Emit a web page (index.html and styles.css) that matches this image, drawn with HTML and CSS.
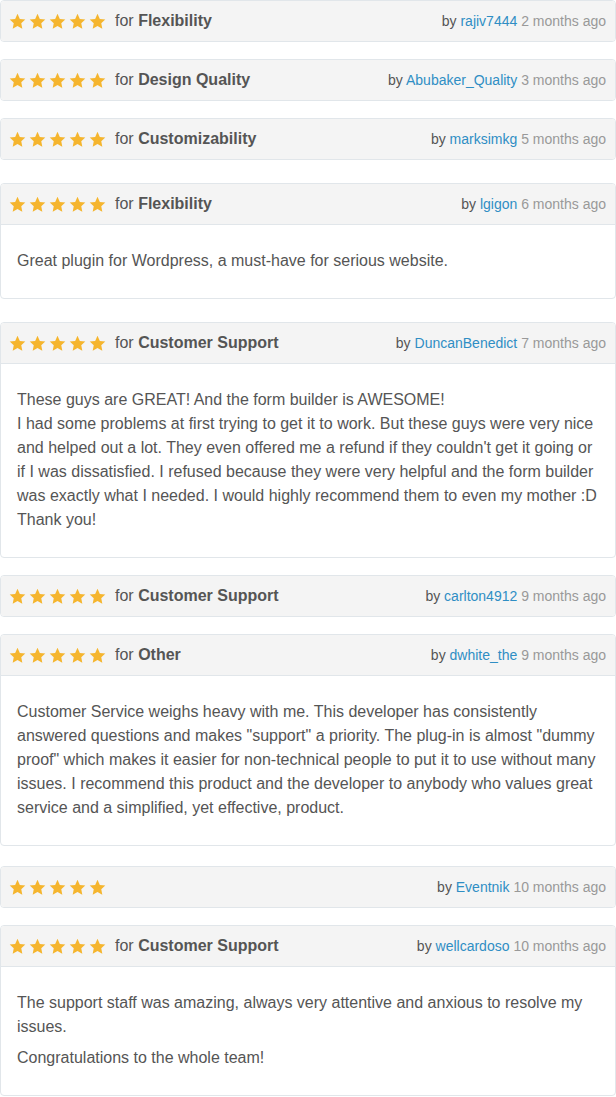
FILE: index.html
```html
<!DOCTYPE html>
<html>
<head>
<meta charset="utf-8">
<link rel="stylesheet" href="styles.css">
</head>
<body>
<svg width="0" height="0" class="defs">
  <defs>
    <symbol id="star" viewBox="0 0 24 24">
      <path d="M12 1.2l3.3 7.1 7.7.9-5.7 5.3 1.5 7.7L12 18.4l-6.8 3.8 1.5-7.7L1 9.2l7.7-.9z"/>
    </symbol>
  </defs>
</svg>
<div class="reviews">

  <div class="review">
    <div class="head">
      <div class="left"><span class="stars"><svg><use href="#star"/></svg><svg><use href="#star"/></svg><svg><use href="#star"/></svg><svg><use href="#star"/></svg><svg><use href="#star"/></svg></span><span class="for">for <b>Flexibility</b></span></div>
      <div class="meta">by <a>rajiv7444</a> <span class="ago">2 months ago</span></div>
    </div>
  </div>

  <div class="review">
    <div class="head">
      <div class="left"><span class="stars"><svg><use href="#star"/></svg><svg><use href="#star"/></svg><svg><use href="#star"/></svg><svg><use href="#star"/></svg><svg><use href="#star"/></svg></span><span class="for">for <b>Design Quality</b></span></div>
      <div class="meta">by <a>Abubaker_Quality</a> <span class="ago">3 months ago</span></div>
    </div>
  </div>

  <div class="review">
    <div class="head">
      <div class="left"><span class="stars"><svg><use href="#star"/></svg><svg><use href="#star"/></svg><svg><use href="#star"/></svg><svg><use href="#star"/></svg><svg><use href="#star"/></svg></span><span class="for">for <b>Customizability</b></span></div>
      <div class="meta">by <a>marksimkg</a> <span class="ago">5 months ago</span></div>
    </div>
  </div>

  <div class="review gap-lg">
    <div class="head">
      <div class="left"><span class="stars"><svg><use href="#star"/></svg><svg><use href="#star"/></svg><svg><use href="#star"/></svg><svg><use href="#star"/></svg><svg><use href="#star"/></svg></span><span class="for">for <b>Flexibility</b></span></div>
      <div class="meta">by <a>lgigon</a> <span class="ago">6 months ago</span></div>
    </div>
    <div class="body">
      <p>Great plugin for Wordpress, a must-have for serious website.</p>
    </div>
  </div>

  <div class="review gap-lg">
    <div class="head">
      <div class="left"><span class="stars"><svg><use href="#star"/></svg><svg><use href="#star"/></svg><svg><use href="#star"/></svg><svg><use href="#star"/></svg><svg><use href="#star"/></svg></span><span class="for">for <b>Customer Support</b></span></div>
      <div class="meta">by <a>DuncanBenedict</a> <span class="ago">7 months ago</span></div>
    </div>
    <div class="body">
      <p>These guys are GREAT! And the form builder is AWESOME!<br>I had some problems at first trying to get it to work. But these guys were very nice and helped out a lot. They even offered me a refund if they couldn't get it going or if I was dissatisfied. I refused because they were very helpful and the form builder was exactly what I needed. I would highly recommend them to even my mother :D<br>Thank you!</p>
    </div>
  </div>

  <div class="review">
    <div class="head">
      <div class="left"><span class="stars"><svg><use href="#star"/></svg><svg><use href="#star"/></svg><svg><use href="#star"/></svg><svg><use href="#star"/></svg><svg><use href="#star"/></svg></span><span class="for">for <b>Customer Support</b></span></div>
      <div class="meta">by <a>carlton4912</a> <span class="ago">9 months ago</span></div>
    </div>
  </div>

  <div class="review">
    <div class="head">
      <div class="left"><span class="stars"><svg><use href="#star"/></svg><svg><use href="#star"/></svg><svg><use href="#star"/></svg><svg><use href="#star"/></svg><svg><use href="#star"/></svg></span><span class="for">for <b>Other</b></span></div>
      <div class="meta">by <a>dwhite_the</a> <span class="ago">9 months ago</span></div>
    </div>
    <div class="body">
      <p>Customer Service weighs heavy with me. This developer has consistently answered questions and makes "support" a priority. The plug-in is almost "dummy proof" which makes it easier for non-technical people to put it to use without many issues. I recommend this product and the developer to anybody who values great service and a simplified, yet effective, product.</p>
    </div>
  </div>

  <div class="review gap-md">
    <div class="head">
      <div class="left"><span class="stars"><svg><use href="#star"/></svg><svg><use href="#star"/></svg><svg><use href="#star"/></svg><svg><use href="#star"/></svg><svg><use href="#star"/></svg></span></div>
      <div class="meta">by <a>Eventnik</a> <span class="ago">10 months ago</span></div>
    </div>
  </div>

  <div class="review">
    <div class="head">
      <div class="left"><span class="stars"><svg><use href="#star"/></svg><svg><use href="#star"/></svg><svg><use href="#star"/></svg><svg><use href="#star"/></svg><svg><use href="#star"/></svg></span><span class="for">for <b>Customer Support</b></span></div>
      <div class="meta">by <a>wellcardoso</a> <span class="ago">10 months ago</span></div>
    </div>
    <div class="body">
      <p>The support staff was amazing, always very attentive and anxious to resolve my issues.</p>
      <p>Congratulations to the whole team!</p>
    </div>
  </div>

</div>
</body>
</html>
```

FILE: styles.css
```css
html, body {
  margin: 0;
  padding: 0;
  background: #fff;
}
body {
  font-family: "Liberation Sans", Arial, sans-serif;
  color: #555;
}
.defs {
  position: absolute;
  width: 0;
  height: 0;
}
.reviews {
  display: flex;
  flex-direction: column;
  width: 616px;
}
.review {
  border: 1px solid #e1e6ea;
  border-radius: 4px;
  margin-bottom: 17px;
  background: #fff;
  overflow: hidden;
}
.review.gap-lg {
  margin-top: 6px;
}
.review.gap-md {
  margin-top: 3px;
}
.head {
  height: 40px;
  background: #f4f4f4;
  display: flex;
  align-items: center;
  justify-content: space-between;
  padding: 0 9px 0 8px;
}
.review .body {
  border-top: 1px solid #e1e6ea;
  padding: 24px 16px 25px 16px;
}
.left {
  display: flex;
  align-items: center;
}
.stars {
  display: flex;
  gap: 3px;
  margin-right: 9px;
}
.stars svg {
  width: 17px;
  height: 17px;
  fill: #f5b52e;
}
.for {
  font-size: 16px;
  color: #555;
}
.for b {
  color: #555;
}
.meta {
  font-size: 14px;
  color: #555;
}
.meta a {
  color: #2f8ec4;
}
.meta .ago {
  color: #999;
}
.body p {
  margin: 0 0 7px 0;
  font-size: 16px;
  line-height: 24px;
  color: #555;
}
.body p:last-child {
  margin-bottom: 0;
}
```
